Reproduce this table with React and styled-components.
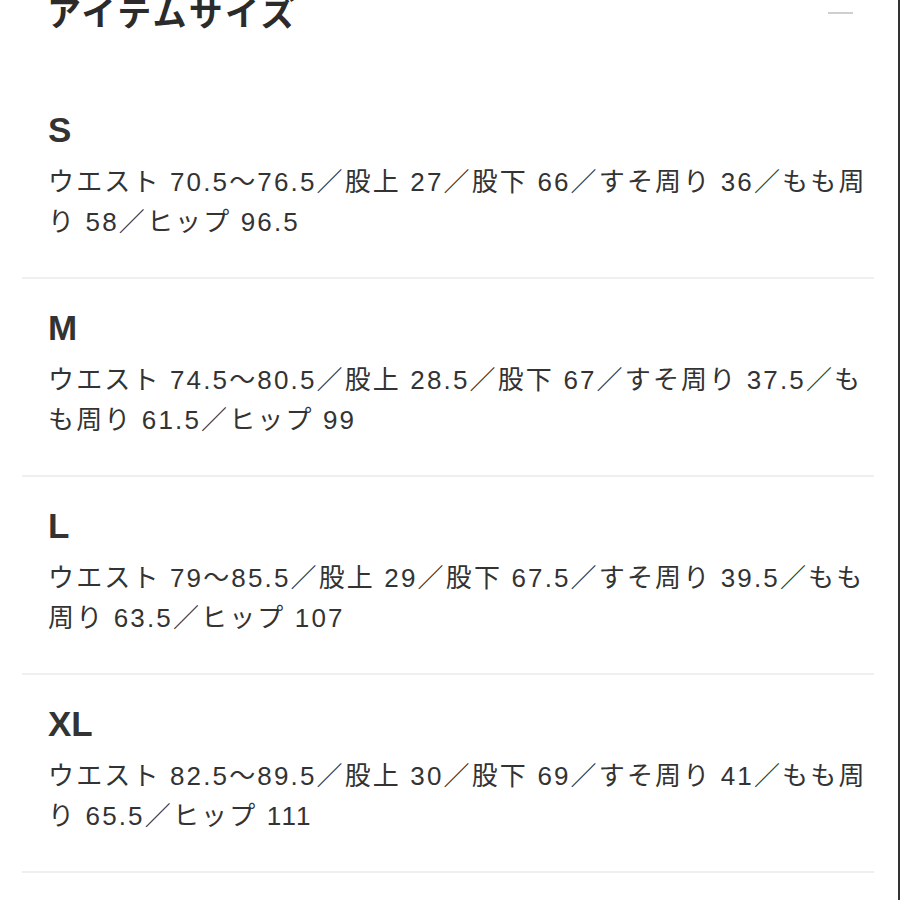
import React from "react";
import styled, { createGlobalStyle } from "styled-components";

const GlobalStyle = createGlobalStyle`
  html, body {
    margin: 0;
    padding: 0;
    background: #fff;
  }
`;

const sizes = [
  {
    label: "S",
    text: "ウエスト 70.5〜76.5／股上 27／股下 66／すそ周り 36／もも周り 58／ヒップ 96.5",
  },
  {
    label: "M",
    text: "ウエスト 74.5〜80.5／股上 28.5／股下 67／すそ周り 37.5／もも周り 61.5／ヒップ 99",
  },
  {
    label: "L",
    text: "ウエスト 79〜85.5／股上 29／股下 67.5／すそ周り 39.5／もも周り 63.5／ヒップ 107",
  },
  {
    label: "XL",
    text: "ウエスト 82.5〜89.5／股上 30／股下 69／すそ周り 41／もも周り 65.5／ヒップ 111",
  },
];

function App() {
  return (
    <>
      <GlobalStyle />
      <Page>
        <Header>
          <Title>アイテムサイズ</Title>
          <Minus />
        </Header>
        <List>
          {sizes.map((s) => (
            <Section key={s.label}>
              <SizeLabel>{s.label}</SizeLabel>
              <Detail>{s.text}</Detail>
            </Section>
          ))}
        </List>
      </Page>
    </>
  );
}

const Page = styled.div`
  width: 900px;
  height: 900px;
  box-sizing: border-box;
  overflow: hidden;
  background: #fff;
  border-right: 2px solid #333;
`;

const Header = styled.div`
  display: flex;
  justify-content: space-between;
  align-items: flex-start;
  margin-top: -8px;
  padding: 0 45px 0 47px;
  height: 40px;
  margin-bottom: 49px;
`;

const Title = styled.h2`
  margin: 0;
  font-family: "Noto Sans CJK JP", sans-serif;
  font-size: 34px;
  line-height: 40px;
  font-weight: 700;
  letter-spacing: 2.3px;
  color: #2b2b2b;
`;

const Minus = styled.span`
  display: block;
  width: 25px;
  height: 2px;
  margin-top: 20px;
  background: #cfcfcf;
`;

const List = styled.div`
  margin: 0 24px 0 22px;
`;

const Section = styled.section`
  padding: 31px 6px 35px 26px;
  border-bottom: 2px solid #efefef;
`;

const SizeLabel = styled.div`
  font-family: "Liberation Sans", Arial, sans-serif;
  font-size: 35px;
  line-height: 35px;
  font-weight: 700;
  color: #333;
  margin-bottom: 15px;
`;

const Detail = styled.p`
  margin: 0;
  font-family: "Liberation Sans", "Noto Sans CJK JP", sans-serif;
  font-size: 26px;
  line-height: 40px;
  letter-spacing: 2.15px;
  color: #333;
`;

export default App;
